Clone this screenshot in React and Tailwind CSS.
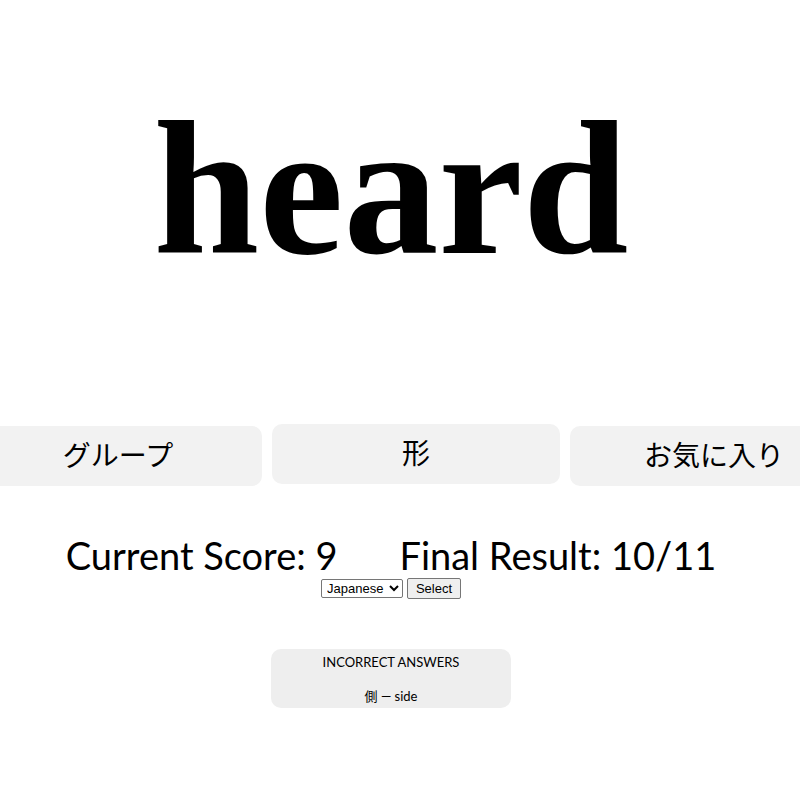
import React from 'react';

const TABS = [
  { label: 'グループ', offset: 'mt-[2px]' },
  { label: '形', offset: 'mt-0' },
  { label: 'お気に入り', offset: 'mt-[2px]' },
];

export default function App() {
  return (
    <div className="w-[800px] h-[800px] overflow-hidden bg-white text-black">
      {/* word card */}
      <div className="pt-[84px] h-[424px] w-[782px] text-center">
        <h1 className="font-['Liberation_Serif',serif] font-bold text-[190px] leading-[210px]">heard</h1>
      </div>

      {/* category tabs */}
      <div className="flex items-start gap-[10px] ml-[-26px] h-[62px]">
        {TABS.map((tab) => (
          <div
            key={tab.label}
            className={`shrink-0 w-[288px] h-[60px] rounded-[10px] bg-[#f2f2f2] flex items-center justify-center pb-[4px] font-['Noto_Sans_CJK_JP',sans-serif] text-[28px] ${tab.offset}`}
          >
            {tab.label}
          </div>
        ))}
      </div>

      {/* score */}
      <div className="w-[782px] mt-[46px] flex flex-col items-center font-['Lato',sans-serif]">
        <div className="flex text-[38px] leading-[46px]">
          <span>Current Score: 9</span>
          <span className="ml-[62px]">Final Result: 10/11</span>
        </div>
        <div className="flex items-center gap-[4px] font-['Liberation_Sans',sans-serif] text-[13px]">
          <select className="h-[19px] w-[82px] border border-[#767676] rounded-[2px] bg-white px-[1px] text-[13px]">
            <option>Japanese</option>
            <option>English</option>
          </select>
          <button className="h-[21px] w-[54px] border border-[#767676] rounded-[2px] bg-[#efefef] text-[13px]">
            Select
          </button>
        </div>

        <div className="mt-[50px] w-[240px] h-[59px] rounded-[10px] bg-[#eeeeee] flex flex-col items-center text-[13px] font-['Lato','Noto_Sans_CJK_JP',sans-serif]">
          <div className="mt-[4px]">INCORRECT ANSWERS</div>
          <div className="mt-[14px]">側 — side</div>
        </div>
      </div>
    </div>
  );
}
